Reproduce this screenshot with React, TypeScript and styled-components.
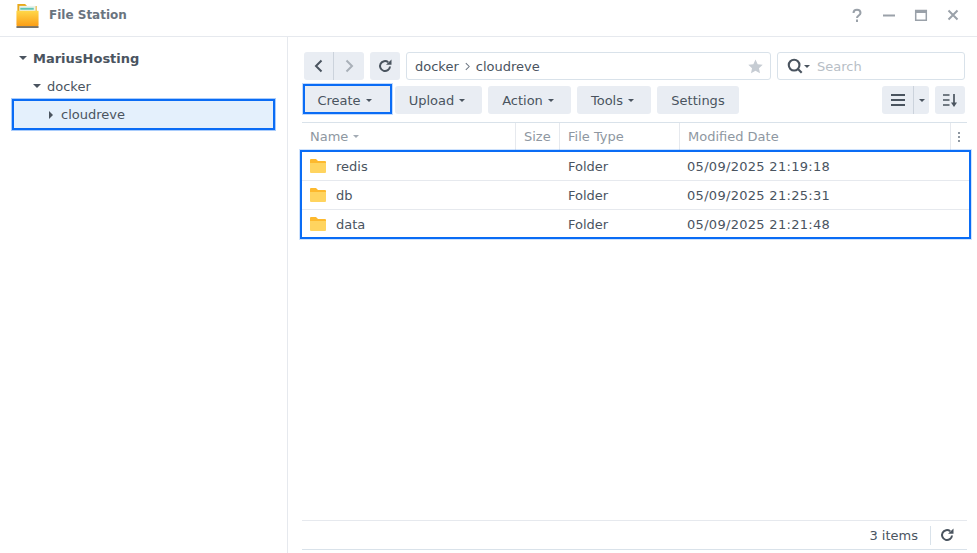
import React from 'react';
import styled, { createGlobalStyle } from 'styled-components';

const GlobalStyle = createGlobalStyle`
  html, body { margin: 0; padding: 0; background: #fff; }
  body { font-family: 'DejaVu Sans', 'Noto Sans', sans-serif; font-size: 13px; color: #4a545f; }
`;

const Window = styled.div`
  width: 977px;
  height: 553px;
  display: flex;
  flex-direction: column;
  overflow: hidden;
`;

const TitleBar = styled.header`
  box-sizing: border-box;
  height: 37px;
  flex: none;
  display: flex;
  align-items: center;
  padding: 0 16px 6px 15px;
  border-bottom: 1px solid #e6e9ee;
`;

const AppName = styled.div`
  margin-left: 9px;
  font-size: 12px;
  font-weight: 700;
  color: #6a747f;
  flex: 1;
`;

const WindowButtons = styled.div`
  display: flex;
  align-items: center;
  gap: 16px;
`;

const Body = styled.div`
  flex: 1;
  display: flex;
  min-height: 0;
`;

const Sidebar = styled.aside`
  width: 288px;
  flex: none;
  box-sizing: border-box;
  padding-top: 7px;
  border-right: 1px solid #e6e9ee;
`;

const TreeRow = styled.div<{ $depth: number; $bold?: boolean }>`
  box-sizing: border-box;
  height: 28px;
  padding-left: ${p => 19 + p.$depth * 14}px;
  display: flex;
  align-items: center;
  gap: 6px;
  font-weight: ${p => (p.$bold ? 700 : 400)};
`;

const SelectedTreeRow = styled.div`
  box-sizing: border-box;
  height: 31px;
  margin: -1px 12px 0;
  padding-left: 35px;
  display: flex;
  align-items: center;
  gap: 8px;
  background: #e4f0fc;
  border: 2px solid #0a6cf5;
  box-shadow: 0 0 0 1px rgba(10, 108, 245, 0.35);
`;

const CaretDown = styled.span<{ $size?: number; $color?: string }>`
  width: 0;
  height: 0;
  border-left: ${p => p.$size || 3}px solid transparent;
  border-right: ${p => p.$size || 3}px solid transparent;
  border-top: ${p => p.$size || 3}px solid ${p => p.$color || '#4a545f'};
  flex: none;
`;

const CaretRight = styled.span`
  width: 0;
  height: 0;
  border-top: 4px solid transparent;
  border-bottom: 4px solid transparent;
  border-left: 4px solid #4a545f;
  flex: none;
`;

const Main = styled.main`
  flex: 1;
  min-width: 0;
  display: flex;
  flex-direction: column;
  padding: 15px 10px 3px 14px;
`;

const NavRow = styled.div`
  display: flex;
  gap: 6px;
  padding: 0 2px;
  height: 28px;
`;

const ButtonGroup = styled.div`
  display: flex;
  background: #e9edf3;
  border-radius: 3px;
`;

const IconButton = styled.button<{ $width: number; $divider?: boolean }>`
  box-sizing: content-box;
  width: ${p => p.$width}px;
  height: 28px;
  padding: 0;
  border: none;
  background: transparent;
  display: flex;
  align-items: center;
  justify-content: center;
  border-right: ${p => (p.$divider ? '1px solid #ccd3dc' : 'none')};
`;

const Field = styled.div<{ $width: number }>`
  box-sizing: border-box;
  width: ${p => p.$width}px;
  height: 28px;
  border: 1px solid #d9e2ea;
  border-radius: 3px;
  display: flex;
  align-items: center;
`;

const PathField = styled(Field)`
  padding: 0 7px 0 8px;
  justify-content: space-between;
`;

const Crumbs = styled.div`
  display: flex;
  align-items: center;
  gap: 4px;
`;

const SearchField = styled(Field)`
  padding-left: 9px;
  gap: 1px;
`;

const Placeholder = styled.span`
  margin-left: 6px;
  color: #b7bec6;
`;

const ActionRow = styled.div`
  display: flex;
  align-items: center;
  padding: 0 2px;
  margin-top: 6px;
  height: 28px;
`;

const ActionButton = styled.button<{ $width: number }>`
  box-sizing: border-box;
  width: ${p => p.$width}px;
  height: 28px;
  padding: 0 3px 0 0;
  margin-right: 6px;
  border: none;
  border-radius: 3px;
  background: #e9edf3;
  font: inherit;
  color: inherit;
  display: flex;
  align-items: center;
  justify-content: center;
  gap: 5px;
`;

const SettingsButton = styled(ActionButton)`
  padding: 0;
`;

const CreateButton = styled(ActionButton)`
  align-self: flex-end;
  height: 30px;
  margin: 0 3px 0 -1px;
  padding: 2px 6px 0 0;
  border: 2px solid #0a6cf5;
  border-radius: 0;
  box-shadow: 0 0 0 1px rgba(10, 108, 245, 0.25);
`;

const Spacer = styled.div`
  flex: 1;
`;

const ViewButton = styled(ButtonGroup)`
  margin-right: 6px;
`;

const TableHeader = styled.div`
  box-sizing: border-box;
  margin-top: 8px;
  height: 28px;
  display: grid;
  grid-template-columns: 214px 44px 120px 271px 16px;
  border-top: 1px solid #d9e2ea;
  color: #8e97a1;
`;

const HeaderCell = styled.div`
  display: flex;
  align-items: center;
  gap: 5px;
  padding-left: 8px;
  border-right: 1px solid #e6e9ee;
`;

const MenuCell = styled.div`
  display: flex;
  align-items: center;
  justify-content: center;
`;

const Rows = styled.div`
  box-sizing: border-box;
  height: 89px;
  margin: 0 -4px 0 -2px;
  border: 2px solid #0a6cf5;
  box-shadow: 0 0 0 1px rgba(10, 108, 245, 0.2);
`;

const Row = styled.div`
  height: 28px;
  margin-bottom: 1px;
  display: grid;
  grid-template-columns: 266px 119px 1fr;
  align-items: center;
  &:not(:last-child) {
    box-shadow: 0 1px 0 #e6e9ee;
  }
`;

const NameCell = styled.div`
  display: flex;
  align-items: center;
  gap: 10px;
  padding-left: 8px;
`;

const DateCell = styled.div`
  letter-spacing: 0.3px;
`;

const Filler = styled.div`
  flex: 1;
`;

const Footer = styled.footer`
  height: 28px;
  flex: none;
  display: flex;
  align-items: center;
  justify-content: flex-end;
  border-top: 1px solid #e6e9ee;
  border-bottom: 1px solid #d9e2ea;
  padding-right: 12px;
`;

const FooterDivider = styled.span`
  width: 1px;
  height: 19px;
  background: #d9e2ea;
  margin: 0 8px 0 12px;
`;

const AppIcon = () => (
  <svg width="25" height="25" viewBox="0 0 25 26">
    <defs>
      <linearGradient id="front" x1="0" y1="0" x2="0" y2="1">
        <stop offset="0" stopColor="#ffd84a" />
        <stop offset="1" stopColor="#fb9a12" />
      </linearGradient>
    </defs>
    <path d="M2 1h8l2 2h10v8H2z" fill="#e8a91c" />
    <rect x="4" y="3" width="17" height="6" fill="#e9f2ec" />
    <rect x="5" y="5" width="14" height="2" fill="#5cc5b5" />
    <path d="M1 8h23v15a2 2 0 0 1-2 2H3a2 2 0 0 1-2-2z" fill="url(#front)" />
    <rect x="1" y="24" width="23" height="2" fill="#7a7468" />
  </svg>
);

const FolderIcon = () => (
  <svg width="16" height="14" viewBox="0 0 16 14">
    <path d="M0 1a1 1 0 0 1 1-1h5l2 2h7a1 1 0 0 1 1 1v2H0z" fill="#fdb92e" />
    <path d="M0 4h16v9a1 1 0 0 1-1 1H1a1 1 0 0 1-1-1z" fill="#ffd45f" />
  </svg>
);

const Stroke = ({ d, color = '#4a545f', width = 2, size = 16 }: { d: string; color?: string; width?: number; size?: number }) => (
  <svg width={size} height={size} viewBox="0 0 16 16" fill="none" stroke={color} strokeWidth={width}>
    <path d={d} />
  </svg>
);

const RefreshIcon = () => (
  <svg width="16" height="16" viewBox="0 0 16 16" fill="none">
    <path d="M13 8.500A5 5 0 1 1 11.200 4.200" stroke="#4a545f" strokeWidth="2" />
    <path d="M9 6.800h5.500V1.500z" fill="#4a545f" />
  </svg>
);

const files = [
  { name: 'redis', date: '05/09/2025 21:19:18' },
  { name: 'db', date: '05/09/2025 21:25:31' },
  { name: 'data', date: '05/09/2025 21:21:48' },
];

const actions = [
  { label: 'Upload', width: 87 },
  { label: 'Action', width: 83 },
  { label: 'Tools', width: 74 },
];

const columns = ['Size', 'File Type', 'Modified Date'];

export default function App() {
  return (
    <Window>
      <GlobalStyle />
      <TitleBar>
        <AppIcon />
        <AppName>File Station</AppName>
        <WindowButtons>
          <Stroke color="#9aa1a9" d="M4.500 6C4.500 1.500 11.500 1.500 11.500 6C11.500 8.500 8 8.500 8 11M8 12.500V15" />
          <Stroke color="#9aa1a9" d="M2 8.500h12" />
          <Stroke color="#9aa1a9" width={1.500} d="M2.700 3.500h10.600v9.800H2.700zM2.700 5.200h10.600M2.700 4.300h10.600" />
          <Stroke color="#9aa1a9" d="M3.500 3.500l9 9M12.500 3.500l-9 9" />
        </WindowButtons>
      </TitleBar>
      <Body>
        <Sidebar>
          <TreeRow $depth={0} $bold>
            <CaretDown $size={4} />
            MariusHosting
          </TreeRow>
          <TreeRow $depth={1}>
            <CaretDown $size={4} />
            docker
          </TreeRow>
          <SelectedTreeRow>
            <CaretRight />
            cloudreve
          </SelectedTreeRow>
        </Sidebar>
        <Main>
          <NavRow>
            <ButtonGroup>
              <IconButton $width={29} $divider>
                <Stroke d="M10.500 2.500L5 8l5.500 5.500" />
              </IconButton>
              <IconButton $width={30}>
                <Stroke color="#a9b0b8" d="M5.500 2.500L11 8l-5.500 5.500" />
              </IconButton>
            </ButtonGroup>
            <ButtonGroup>
              <IconButton $width={30}>
                <RefreshIcon />
              </IconButton>
            </ButtonGroup>
            <PathField $width={365}>
              <Crumbs>
                docker
                <Stroke size={9} color="#6b7580" width={1.800} d="M5 2l6 6-6 6" />
                cloudreve
              </Crumbs>
              <svg width="15" height="15" viewBox="0 0 16 16">
                <path d="M8 .5l2.300 5 5.400.6-4 3.700 1.100 5.400L8 12.500l-4.800 2.700 1.100-5.400-4-3.700 5.400-.6z" fill="#c6ccd3" />
              </svg>
            </PathField>
            <SearchField $width={188}>
              <svg width="16" height="16" viewBox="0 0 18 18" fill="none" stroke="#4a545f" strokeWidth="2.400">
                <circle cx="8" cy="8" r="6" />
                <path d="M12 12l4.500 4.500" />
              </svg>
              <CaretDown />
              <Placeholder>Search</Placeholder>
            </SearchField>
          </NavRow>
          <ActionRow>
            <CreateButton $width={89}>
              Create <CaretDown />
            </CreateButton>
            {actions.map(a => (
              <ActionButton key={a.label} $width={a.width}>
                {a.label} <CaretDown />
              </ActionButton>
            ))}
            <SettingsButton $width={82}>Settings</SettingsButton>
            <Spacer />
            <ViewButton>
              <IconButton $width={31} $divider>
                <Stroke d="M1 3h14M1 8h14M1 13h14" />
              </IconButton>
              <IconButton $width={15}>
                <CaretDown />
              </IconButton>
            </ViewButton>
            <ButtonGroup>
              <IconButton $width={30}>
                <svg width="16" height="16" viewBox="0 0 16 16" fill="none" stroke="#4a545f" strokeWidth="1.700">
                  <path d="M1 3h6.500M1 8h6.500M1 13h6.500M12 2v10" />
                  <path d="M9 10.500h6L12 15z" fill="#4a545f" stroke="none" />
                </svg>
              </IconButton>
            </ButtonGroup>
          </ActionRow>
          <TableHeader>
            <HeaderCell>
              Name <CaretDown $color="#a3abb4" />
            </HeaderCell>
            {columns.map(c => (
              <HeaderCell key={c}>{c}</HeaderCell>
            ))}
            <MenuCell>
              <svg width="4" height="12" viewBox="0 0 4 12" fill="#8e97a1">
                <rect x="1" y="1" width="2" height="2" />
                <rect x="1" y="5" width="2" height="2" />
                <rect x="1" y="9" width="2" height="2" />
              </svg>
            </MenuCell>
          </TableHeader>
          <Rows>
            {files.map(f => (
              <Row key={f.name}>
                <NameCell>
                  <FolderIcon />
                  {f.name}
                </NameCell>
                <div>Folder</div>
                <DateCell>{f.date}</DateCell>
              </Row>
            ))}
          </Rows>
          <Filler />
          <Footer>
            3 items
            <FooterDivider />
            <RefreshIcon />
          </Footer>
        </Main>
      </Body>
    </Window>
  );
}
